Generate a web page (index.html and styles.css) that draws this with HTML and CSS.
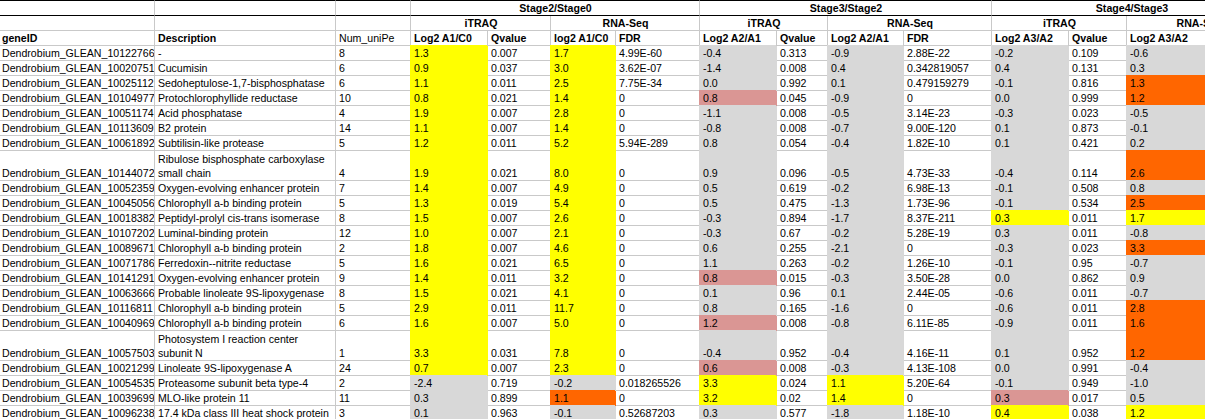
FILE: index.html
```html
<!DOCTYPE html>
<html>
<head>
<meta charset="utf-8">
<link rel="stylesheet" href="styles.css">
</head>
<body>
<table class="sheet">
<colgroup>
<col class="w-a"><col class="w-b"><col class="w-c"><col class="w-d"><col class="w-e"><col class="w-f"><col class="w-g"><col class="w-h"><col class="w-i"><col class="w-j"><col class="w-k"><col class="w-l"><col class="w-m"><col class="w-n">
</colgroup>
<tr class="r1"><td></td><td></td><td></td><td colspan="4" class="b ctr">Stage2/Stage0</td><td colspan="4" class="b ctr">Stage3/Stage2</td><td colspan="3" class="b ctr">Stage4/Stage3</td></tr>
<tr><td></td><td></td><td></td><td colspan="2" class="b ctr">iTRAQ</td><td colspan="2" class="b ctr">RNA-Seq</td><td colspan="2" class="b ctr">iTRAQ</td><td colspan="2" class="b ctr">RNA-Seq</td><td colspan="2" class="b ctr">iTRAQ</td><td class="b ctr">RNA-Seq</td></tr>
<tr><td class="b">geneID</td><td class="b">Description</td><td>Num_uniPe</td><td class="b">Log2 A1/C0</td><td class="b">Qvalue</td><td class="b">log2 A1/C0</td><td class="b">FDR</td><td class="b">Log2 A2/A1</td><td class="b">Qvalue</td><td class="b">Log2 A2/A1</td><td class="b">FDR</td><td class="b">Log2 A3/A2</td><td class="b">Qvalue</td><td class="b">Log2 A3/A2</td></tr>
<tr><td>Dendrobium_GLEAN_10122766</td><td>-</td><td>8</td><td class="y">1.3</td><td>0.007</td><td class="y">1.7</td><td>4.99E-60</td><td class="g">-0.4</td><td>0.313</td><td class="g">-0.9</td><td>2.88E-22</td><td class="g">-0.2</td><td>0.109</td><td class="g">-0.6</td></tr>
<tr><td>Dendrobium_GLEAN_10020751</td><td>Cucumisin</td><td>6</td><td class="y">0.9</td><td>0.037</td><td class="y">3.0</td><td>3.62E-07</td><td class="g">-1.4</td><td>0.008</td><td class="g">0.4</td><td>0.342819057</td><td class="g">0.4</td><td>0.131</td><td class="g">0.3</td></tr>
<tr><td>Dendrobium_GLEAN_10025112</td><td>Sedoheptulose-1,7-bisphosphatase</td><td>6</td><td class="y">1.1</td><td>0.011</td><td class="y">2.5</td><td>7.75E-34</td><td class="g">0.0</td><td>0.992</td><td class="g">0.1</td><td>0.479159279</td><td class="g">-0.1</td><td>0.816</td><td class="o">1.3</td></tr>
<tr><td>Dendrobium_GLEAN_10104977</td><td>Protochlorophyllide reductase</td><td>10</td><td class="y">0.8</td><td>0.021</td><td class="y">1.4</td><td>0</td><td class="p">0.8</td><td>0.045</td><td class="g">-0.9</td><td>0</td><td class="g">0.0</td><td>0.999</td><td class="o">1.2</td></tr>
<tr><td>Dendrobium_GLEAN_10051174</td><td>Acid phosphatase</td><td>4</td><td class="y">1.9</td><td>0.007</td><td class="y">2.8</td><td>0</td><td class="g">-1.1</td><td>0.008</td><td class="g">-0.5</td><td>3.14E-23</td><td class="g">-0.3</td><td>0.023</td><td class="g">-0.5</td></tr>
<tr><td>Dendrobium_GLEAN_10113609</td><td>B2 protein</td><td>14</td><td class="y">1.1</td><td>0.007</td><td class="y">1.4</td><td>0</td><td class="g">-0.8</td><td>0.008</td><td class="g">-0.7</td><td>9.00E-120</td><td class="g">0.1</td><td>0.873</td><td class="g">-0.1</td></tr>
<tr><td>Dendrobium_GLEAN_10061892</td><td>Subtilisin-like protease</td><td>5</td><td class="y">1.2</td><td>0.011</td><td class="y">5.2</td><td>5.94E-289</td><td class="g">0.8</td><td>0.054</td><td class="g">-0.4</td><td>1.82E-10</td><td class="g">0.1</td><td>0.421</td><td class="g">0.2</td></tr>
<tr class="tall"><td>Dendrobium_GLEAN_10144072</td><td>Ribulose bisphosphate carboxylase<br>small chain</td><td>4</td><td class="y">1.9</td><td>0.021</td><td class="y">8.0</td><td>0</td><td class="g">0.9</td><td>0.096</td><td class="g">-0.5</td><td>4.73E-33</td><td class="g">-0.4</td><td>0.114</td><td class="o">2.6</td></tr>
<tr><td>Dendrobium_GLEAN_10052359</td><td>Oxygen-evolving enhancer protein</td><td>7</td><td class="y">1.4</td><td>0.007</td><td class="y">4.9</td><td>0</td><td class="g">0.5</td><td>0.619</td><td class="g">-0.2</td><td>6.98E-13</td><td class="g">-0.1</td><td>0.508</td><td class="g">0.8</td></tr>
<tr><td>Dendrobium_GLEAN_10045056</td><td>Chlorophyll a-b binding protein</td><td>5</td><td class="y">1.3</td><td>0.019</td><td class="y">5.4</td><td>0</td><td class="g">0.5</td><td>0.475</td><td class="g">-1.3</td><td>1.73E-96</td><td class="g">-0.1</td><td>0.534</td><td class="o">2.5</td></tr>
<tr><td>Dendrobium_GLEAN_10018382</td><td>Peptidyl-prolyl cis-trans isomerase</td><td>8</td><td class="y">1.5</td><td>0.007</td><td class="y">2.6</td><td>0</td><td class="g">-0.3</td><td>0.894</td><td class="g">-1.7</td><td>8.37E-211</td><td class="y">0.3</td><td>0.011</td><td class="y">1.7</td></tr>
<tr><td>Dendrobium_GLEAN_10107202</td><td>Luminal-binding protein</td><td>12</td><td class="y">1.0</td><td>0.007</td><td class="y">2.1</td><td>0</td><td class="g">-0.3</td><td>0.67</td><td class="g">-0.2</td><td>5.28E-19</td><td class="g">0.3</td><td>0.011</td><td class="g">-0.8</td></tr>
<tr><td>Dendrobium_GLEAN_10089671</td><td>Chlorophyll a-b binding protein</td><td>2</td><td class="y">1.8</td><td>0.007</td><td class="y">4.6</td><td>0</td><td class="g">0.6</td><td>0.255</td><td class="g">-2.1</td><td>0</td><td class="g">-0.3</td><td>0.023</td><td class="o">3.3</td></tr>
<tr><td>Dendrobium_GLEAN_10071786</td><td>Ferredoxin--nitrite reductase</td><td>5</td><td class="y">1.6</td><td>0.021</td><td class="y">6.5</td><td>0</td><td class="g">1.1</td><td>0.263</td><td class="g">-0.2</td><td>1.26E-10</td><td class="g">-0.1</td><td>0.95</td><td class="g">-0.7</td></tr>
<tr><td>Dendrobium_GLEAN_10141291</td><td>Oxygen-evolving enhancer protein</td><td>9</td><td class="y">1.4</td><td>0.011</td><td class="y">3.2</td><td>0</td><td class="p">0.8</td><td>0.015</td><td class="g">-0.3</td><td>3.50E-28</td><td class="g">0.0</td><td>0.862</td><td class="g">0.9</td></tr>
<tr><td>Dendrobium_GLEAN_10063666</td><td>Probable linoleate 9S-lipoxygenase</td><td>8</td><td class="y">1.5</td><td>0.021</td><td class="y">4.1</td><td>0</td><td class="g">0.1</td><td>0.96</td><td class="g">0.1</td><td>2.44E-05</td><td class="g">-0.6</td><td>0.011</td><td class="g">-0.7</td></tr>
<tr><td>Dendrobium_GLEAN_10116811</td><td>Chlorophyll a-b binding protein</td><td>5</td><td class="y">2.9</td><td>0.011</td><td class="y">11.7</td><td>0</td><td class="g">0.8</td><td>0.165</td><td class="g">-1.6</td><td>0</td><td class="g">-0.6</td><td>0.011</td><td class="o">2.8</td></tr>
<tr><td>Dendrobium_GLEAN_10040969</td><td>Chlorophyll a-b binding protein</td><td>6</td><td class="y">1.6</td><td>0.007</td><td class="y">5.0</td><td>0</td><td class="p">1.2</td><td>0.008</td><td class="g">-0.8</td><td>6.11E-85</td><td class="g">-0.9</td><td>0.011</td><td class="o">1.6</td></tr>
<tr class="tall"><td>Dendrobium_GLEAN_100575031</td><td>Photosystem I reaction center<br>subunit N</td><td>1</td><td class="y">3.3</td><td>0.031</td><td class="y">7.8</td><td>0</td><td class="g">-0.4</td><td>0.952</td><td class="g">-0.4</td><td>4.16E-11</td><td class="g">0.1</td><td>0.952</td><td class="o">1.2</td></tr>
<tr><td>Dendrobium_GLEAN_10021299</td><td>Linoleate 9S-lipoxygenase A</td><td>24</td><td class="y">0.7</td><td>0.007</td><td class="y">2.3</td><td>0</td><td class="p">0.6</td><td>0.008</td><td class="g">-0.3</td><td>4.13E-108</td><td class="g">0.0</td><td>0.991</td><td class="g">-0.4</td></tr>
<tr><td>Dendrobium_GLEAN_10054535</td><td>Proteasome subunit beta type-4</td><td>2</td><td class="g">-2.4</td><td>0.719</td><td class="g">-0.2</td><td>0.018265526</td><td class="y">3.3</td><td>0.024</td><td class="y">1.1</td><td>5.20E-64</td><td class="g">-0.1</td><td>0.949</td><td class="g">-1.0</td></tr>
<tr><td>Dendrobium_GLEAN_10039699</td><td>MLO-like protein 11</td><td>11</td><td class="g">0.3</td><td>0.899</td><td class="o">1.1</td><td>0</td><td class="y">3.2</td><td>0.02</td><td class="y">1.4</td><td>0</td><td class="p">0.3</td><td>0.017</td><td class="g">0.5</td></tr>
<tr><td>Dendrobium_GLEAN_10096238</td><td>17.4 kDa class III heat shock protein</td><td>3</td><td class="g">0.1</td><td>0.963</td><td class="g">-0.1</td><td>0.52687203</td><td class="g">0.3</td><td>0.577</td><td class="g">-1.8</td><td>1.18E-10</td><td class="y">0.4</td><td>0.038</td><td class="y">1.2</td></tr>
</table>
</body>
</html>
```

FILE: styles.css
```css
html, body {
  margin: 0;
  padding: 0;
  background: #ffffff;
  overflow: hidden;
}

.sheet {
  table-layout: fixed;
  width: 1272px;
  border-collapse: separate;
  border-spacing: 0;
  font-family: "Liberation Sans", Arial, sans-serif;
  font-size: 10.6px;
  color: #000000;
}

.w-a { width: 155px; }
.w-b { width: 181px; }
.w-c { width: 75px; }
.w-d { width: 77px; }
.w-e { width: 63px; }
.w-f { width: 65px; }
.w-g { width: 84px; }
.w-h { width: 77px; }
.w-i { width: 51px; }
.w-j { width: 76px; }
.w-k { width: 88px; }
.w-l { width: 77px; }
.w-m { width: 58px; }
.w-n { width: 145px; }

.sheet td {
  padding: 0 2px 0 3px;
  line-height: 14px;
  height: 14px;
  vertical-align: bottom;
  white-space: nowrap;
  overflow: hidden;
  border-right: 1px solid #c9c9c9;
  border-bottom: 1px solid #c9c9c9;
}

.sheet td:first-child {
  padding-left: 2px;
}

.sheet .r1 td {
  border-top: 1px solid #000000;
  border-bottom: 1px solid #000000;
}

.sheet .tall td {
  height: 29px;
}

.b { font-weight: bold; }
.ctr { text-align: center; }

.sheet td.y {
  background: #ffff00;
  border-color: #ffff00;
  box-shadow: -1px -1px 0 #ffff00;
}

.sheet td.g {
  background: #d8d8d8;
  border-color: #d8d8d8;
  box-shadow: -1px -1px 0 #d8d8d8;
}

.sheet td.p {
  background: #da9694;
  border-color: #da9694;
  box-shadow: -1px -1px 0 #da9694;
}

.sheet td.o {
  background: #ff6600;
  border-color: #ff6600;
  box-shadow: -1px -1px 0 #ff6600;
}
```
